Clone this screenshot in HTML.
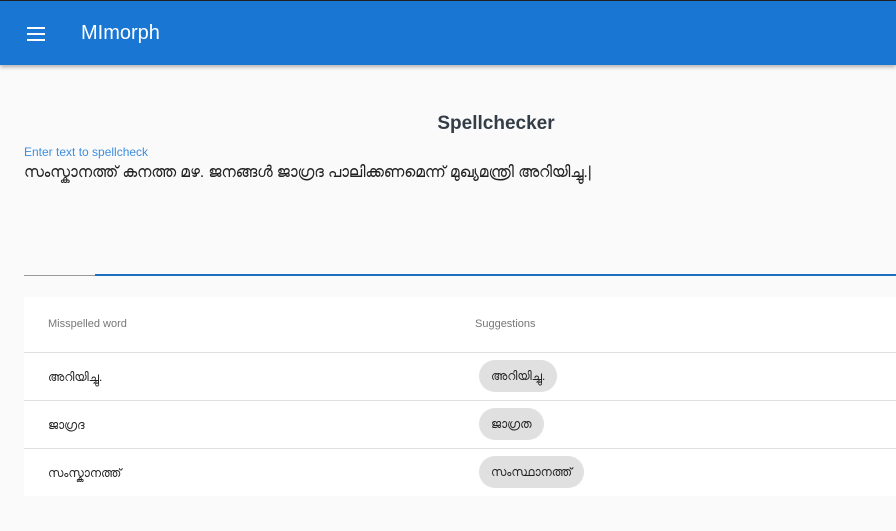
<!DOCTYPE html>
<html><head><meta charset="utf-8"><style>
body{margin:0;width:896px;height:531px;background:#fafafa;font-family:"Liberation Sans","Noto Sans CJK SC",sans-serif;overflow:hidden;position:relative}
.top{position:absolute;left:0;top:0;width:896px;height:1px;background:#222}
.bar{position:absolute;left:0;top:1px;width:896px;height:64px;background:#1976d2;box-shadow:0 2px 4px rgba(0,0,0,.3)}
.bar .t{position:absolute;left:81px;top:21px;color:#fff;font-size:20px}
.ham{position:absolute;left:27px;top:26px;width:18px}
.ham i{display:block;height:2px;background:#fff;margin-bottom:4px}
h1{position:absolute;left:0;width:992px;text-align:center;top:113px;margin:0;font-size:19px;color:#333d47}
.lab{position:absolute;left:24px;top:145px;font-size:12px;color:#3d8ede}
.txt{position:absolute;left:24px;top:164px;font-size:15.4px;color:#222}
.ul1{position:absolute;left:24px;top:275px;width:71px;height:1px;background:#999}
.ul2{position:absolute;left:95px;top:274px;width:801px;height:2px;background:#1e6fc1}
.tbl{position:absolute;left:24px;top:297px;width:872px;height:199px;background:#fff}
.row{position:absolute;left:0;width:872px;border-top:1px solid #e0e0e0;height:47px;font-size:12px;color:#222}
.c1{position:absolute;left:24px;top:17px}
.chip{position:absolute;left:455px;top:7px;height:32px;line-height:32px;border-radius:16px;background:#e0e0e0;padding:0 12px;font-size:12px}
.hd{position:absolute;top:21px;font-size:11px;color:#777}
</style></head><body>
<div class="top"></div>
<div class="bar"><div class="ham"><i></i><i></i><i></i></div><div class="t">MImorph</div></div>
<h1>Spellchecker</h1>
<div class="lab">Enter text to spellcheck</div>
<div class="txt">സംസ്കാനത്ത് കനത്ത മഴ. ജനങ്ങൾ ജാഗ്രദ പാലിക്കണമെന്ന് മുഖ്യമന്ത്രി അറിയിച്ചു.|</div>
<div class="ul1"></div><div class="ul2"></div>
<div class="tbl">
<div class="hd" style="left:24px">Misspelled word</div>
<div class="hd" style="left:451px">Suggestions</div>
<div class="row" style="top:55px"><span class="c1">അറിയിച്ചു.</span><span class="chip">അറിയിച്ചു.</span></div>
<div class="row" style="top:103px"><span class="c1">ജാഗ്രദ</span><span class="chip">ജാഗ്രത</span></div>
<div class="row" style="top:151px"><span class="c1">സംസ്കാനത്ത്</span><span class="chip">സംസ്ഥാനത്ത്</span></div>
</div>
</body></html>
